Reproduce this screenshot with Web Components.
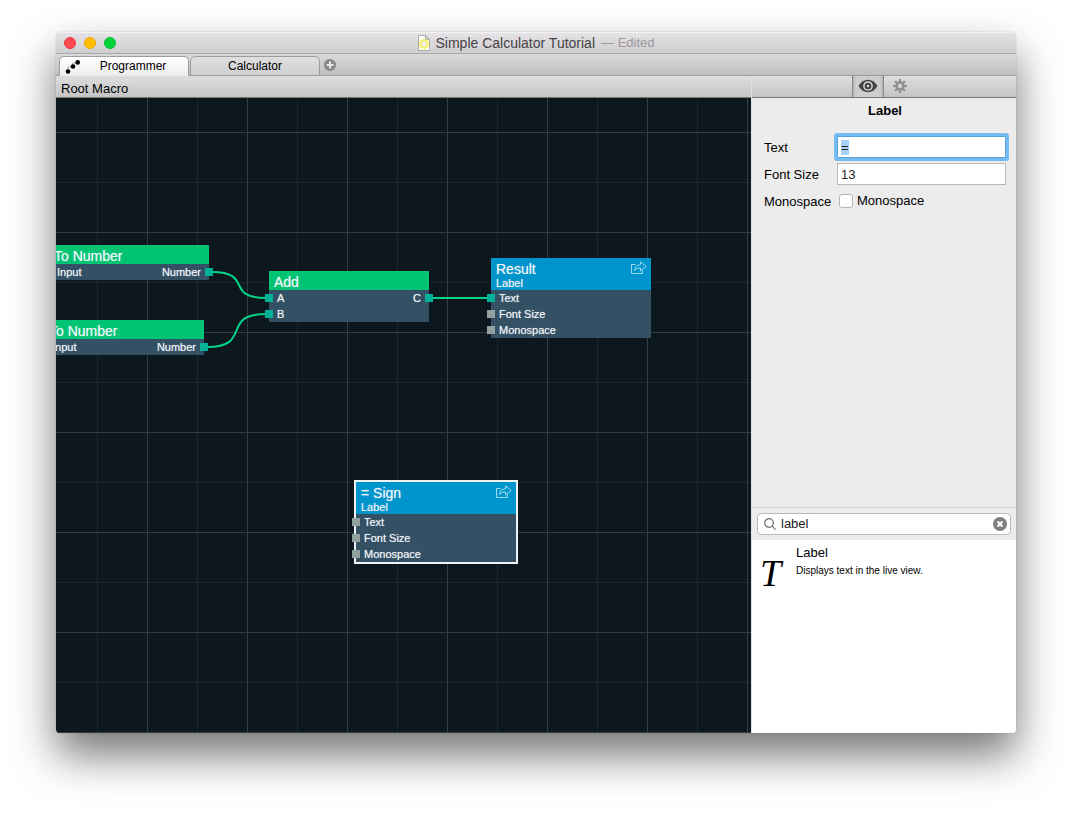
<!DOCTYPE html>
<html lang="en">
<head>
<meta charset="utf-8">
<title>Simple Calculator Tutorial</title>
<style>
  html { height: 100%; }
  body {
    box-sizing: border-box;
    min-height: 100%;
    margin: 0;
    padding: 32px 56px 80px;
    display: flex;
    background: #fff;
    color: #000;
    font: 13px/16px "Liberation Sans", Arial, sans-serif;
  }
</style>
</head>
<body>
<app-window>
  <title-bar slot="title" name="Simple Calculator Tutorial" status="— Edited"></title-bar>
  <tab-strip slot="tabs">
    <doc-tab active>Programmer</doc-tab>
    <doc-tab>Calculator</doc-tab>
  </tab-strip>
  <path-bar slot="main">Root Macro</path-bar>
  <patch-canvas slot="main">
    <patch-node style="--x:-7px;--y:147px" name="To Number">
      <node-row in="on" out="on">Input<span slot="out">Number</span></node-row>
    </patch-node>
    <patch-node style="--x:-12px;--y:222px" name="To Number">
      <node-row in="on" out="on">Input<span slot="out">Number</span></node-row>
    </patch-node>
    <patch-node style="--x:213px;--y:173px" name="Add">
      <node-row in="on" out="on">A<span slot="out">C</span></node-row>
      <node-row in="on">B</node-row>
    </patch-node>
    <patch-node style="--x:435px;--y:160px" name="Result" kind="Label">
      <node-row in="on">Text</node-row>
      <node-row in="off">Font Size</node-row>
      <node-row in="off">Monospace</node-row>
    </patch-node>
    <patch-node style="--x:300px;--y:384px" name="= Sign" kind="Label" selected>
      <node-row in="off">Text</node-row>
      <node-row in="off">Font Size</node-row>
      <node-row in="off">Monospace</node-row>
    </patch-node>
  </patch-canvas>
  <panel-switch slot="side"></panel-switch>
  <node-inspector slot="side"></node-inspector>
  <patch-library slot="side">
    <library-item name="Label">Displays text in the live view.</library-item>
  </patch-library>
</app-window>

<script>
const define = (name, html, setup) => {
  const template = document.createElement('template');
  template.innerHTML = html;
  customElements.define(name, class extends HTMLElement {
    constructor() {
      super();
      this.attachShadow({ mode: 'open' }).append(template.content.cloneNode(true));
    }
    connectedCallback() {
      if (setup) setup(this, this.shadowRoot);
    }
  });
};

define('app-window', `
<style>
  :host {
    flex: 1; min-width: 0; display: flex; flex-direction: column;
    border-radius: 5px 5px 4px 4px; overflow: hidden;
    box-shadow: 0 0 1px rgba(0,0,0,.45), 0 22px 44px rgba(0,0,0,.54);
  }
  .split { flex: 1; display: flex; min-height: 0; }
  main { flex: 1; min-width: 0; display: flex; flex-direction: column; }
  aside {
    flex: 0 0 264px; display: flex; flex-direction: column;
    background: #ececec; border-left: 1px solid #dfe2e3;
  }
</style>
<slot name="title"></slot>
<slot name="tabs"></slot>
<div class="split">
  <main><slot name="main"></slot></main>
  <aside><slot name="side"></slot></aside>
</div>`);

define('title-bar', `
<style>
  :host {
    box-sizing: border-box; height: 22px; display: grid; grid-template-columns: 1fr auto 1fr;
    align-items: center; background: linear-gradient(#e6e3e6, #cfcdcf);
    border-top: 1px solid #f3f2f3; border-bottom: 1px solid #a9a9a9;
  }
  .lights { display: flex; gap: 8px; padding-left: 8px; }
  button { width: 12px; height: 12px; padding: 0; border-radius: 50%; border: 1px solid; }
  .close { background: #ff4a50; border-color: #ea3343; }
  .min { background: #ffbf00; border-color: #eaa900; }
  .zoom { background: #00d43a; border-color: #00bd33; }
  h1 { margin: 0; display: flex; align-items: center; gap: 6px; font-size: 14px; line-height: 20px; font-weight: 400; color: #454345; }
  i { font-style: normal; font-size: 13px; color: #9b999b; }
</style>
<div class="lights">
  <button class="close" aria-label="Close"></button>
  <button class="min" aria-label="Minimize"></button>
  <button class="zoom" aria-label="Zoom"></button>
</div>
<h1>
  <svg width="12" height="16" viewBox="0 0 12 16">
    <path d="M.5.5h7l4 4v11H.5z" fill="#fff" stroke="#a9a9a9"/>
    <path d="M7.500.5v4h4z" fill="#c9c9c9" stroke="#a9a9a9"/>
    <circle cx="6" cy="9" r="4.500" fill="none" stroke="#f3ee3a" stroke-width="1.800" stroke-dasharray="1.500 1.330"/>
    <circle cx="6" cy="9" r="3.200" fill="#f0f0f4" stroke="#f3e92c"/>
  </svg>
  <span class="name"></span><i></i>
</h1>
<span></span>`, (host, root) => {
  root.querySelector('.name').textContent = host.getAttribute('name');
  root.querySelector('i').textContent = host.getAttribute('status');
});

define('tab-strip', `
<style>
  :host {
    box-sizing: border-box; height: 22px; display: flex; gap: 1px; padding: 2px 3px 0;
    background: linear-gradient(#dadada, #bebebe); box-shadow: inset 0 -1px #9d9d9d;
  }
  button { width: 12px; height: 12px; margin: 3px; padding: 0; border: 0; background: none; }
  svg { display: block; }
</style>
<slot></slot>
<button aria-label="Add tab">
  <svg width="12" height="12" viewBox="0 0 12 12"><circle cx="6" cy="6" r="6" fill="#868686"/><path d="M6 2.500v7M2.500 6h7" stroke="#e6e6e6" stroke-width="2"/></svg>
</button>`);

define('doc-tab', `
<style>
  :host { flex: 0 1 130px; display: flex; }
  button {
    box-sizing: border-box; flex: 1; height: 20px; padding: 0 0 1px; position: relative;
    font: 12px/18px "Liberation Sans", Arial, sans-serif; color: #000; text-align: center;
    border: 1px solid #9d9d9d; border-radius: 5px 5px 0 0;
    background: linear-gradient(#dfdfdf, #cfcfcf);
  }
  svg { display: none; position: absolute; left: 5px; top: 3px; }
  :host([active]) button { background: linear-gradient(#fff, #eee); border-bottom-color: #eaeaea; padding-left: 18px; }
  :host([active]) svg { display: block; }
</style>
<button>
  <svg width="16" height="14" viewBox="0 0 16 14"><path d="M3 11.500V8q0-1 1-1h3.500V4q0-1 1-1H12" fill="none" stroke="#999"/><circle cx="3" cy="11.500" r="2.300"/><circle cx="8" cy="6.500" r="2.300"/><circle cx="12.700" cy="2.400" r="2.300"/></svg>
  <slot></slot>
</button>`);

define('path-bar', `
<style>
  :host {
    box-sizing: border-box; height: 22px; padding: 4px 5px 0; line-height: 17px;
    background: linear-gradient(#dedede, #c4c4c4); border-bottom: 1px solid #777;
  }
</style>
<slot></slot>`);

define('patch-canvas', `
<style>
  :host {
    flex: 1; display: block; position: relative; overflow: hidden;
    background:
      linear-gradient(90deg, #303d44 1px, transparent 1px) 91px 0 / 100px 100%,
      linear-gradient(#303d44 1px, transparent 1px) 0 34px / 100% 100px,
      linear-gradient(90deg, #1a282e 1px, transparent 1px) 41px 0 / 100px 100%,
      linear-gradient(#1a282e 1px, transparent 1px) 0 84px / 100% 100px,
      #0d171e;
  }
  svg { position: absolute; inset: 0; width: 100%; height: 100%; }
</style>
<slot></slot>
<svg fill="none" stroke="#00d68a" stroke-width="2">
  <path d="M156 174C198 174 168 200 210 200"/>
  <path d="M151 249C197 249 164 216 210 216"/>
  <path d="M376 200H435"/>
</svg>`);

define('patch-node', `
<style>
  :host {
    position: absolute; left: var(--x); top: var(--y); width: 160px;
    background: #345065; color: #f1f6f8; text-shadow: 0 0 1px rgba(241,246,248,.6);
  }
  header { background: #00c473; padding: 2px 5px 0; height: 17px; font-size: 14px; line-height: 18px; white-space: nowrap; }
  h2 { margin: 0; font: inherit; font-weight: 400; }
  p { display: none; margin: 0; font-size: 11px; line-height: 10px; }
  button { display: none; position: absolute; right: 4px; top: 3px; width: 16px; height: 13px; padding: 0; border: 0; background: none; }
  svg { display: block; }
  :host([kind]) header { background: #0094cc; height: 30px; }
  :host([kind]) p, :host([kind]) button { display: block; }
  :host([selected]) { box-shadow: 0 0 0 2px #eef2f4; }
</style>
<header>
  <h2></h2><p></p>
  <button aria-label="Open"><svg width="16" height="13" viewBox="0 0 16 13" fill="none" stroke="#9edbf2"><path d="M4.500 3.500h-4v9h11V9.500"/><path d="M3.500 9.500Q4 4 9.500 3.700V.9l5.700 4.600-5.700 4.300V7Q5.500 6.500 3.500 9.500z" stroke-linejoin="round"/></svg></button>
</header>
<slot></slot>`, (host, root) => {
  root.querySelector('h2').textContent = host.getAttribute('name');
  root.querySelector('p').textContent = host.getAttribute('kind') || '';
});

define('node-row', `
<style>
  :host { position: relative; z-index: 1; display: flex; justify-content: space-between; height: 16px; padding: 0 8px; font-size: 11px; line-height: 17px; }
  :host::before, :host::after { content: none; position: absolute; top: 4px; width: 8px; height: 8px; background: #00b097; }
  :host([in])::before { content: ""; left: -4px; }
  :host([in="off"])::before { background: #929f9f; }
  :host([out])::after { content: ""; right: -4px; }
</style>
<span><slot></slot></span><slot name="out"></slot>`);

define('panel-switch', `
<style>
  :host {
    box-sizing: border-box; height: 22px; display: flex; justify-content: center;
    background: linear-gradient(#dedede, #c4c4c4); border-bottom: 1px solid #777;
  }
  button { box-sizing: border-box; width: 32px; height: 20px; padding: 0; display: flex; align-items: center; justify-content: center; border: 0; background: none; }
  .on { height: 21px; padding-bottom: 1px; background: linear-gradient(90deg, #b4b4b4, #cdcdcd 3px, #cdcdcd 27px, #b4b4b4); border: solid #858585; border-width: 0 1px; }
</style>
<button class="on" aria-label="View">
  <svg width="20" height="14" viewBox="0 0 20 14"><path d="M.5 7Q4.500.8 10 .8T19.500 7Q15.500 13.200 10 13.200T.5 7z" fill="#404040"/><circle cx="10" cy="7" r="4.100" fill="none" stroke="#d6d6d6" stroke-width="1.500"/><circle cx="10" cy="7" r="1.300" fill="#d6d6d6"/></svg>
</button>
<button aria-label="Settings">
  <svg width="14" height="14" viewBox="-7 -7 14 14" fill="none" stroke="#8f8f8f"><circle r="3.500" stroke-width="2.600"/><path d="M0-7V-4M0 7V4M-7 0H-4M7 0H4M-4.900-4.900-3-3M4.900 4.900 3 3M-4.900 4.900-3 3M4.900-4.900 3-3" stroke-width="2.200"/></svg>
</button>`);

define('node-inspector', `
<style>
  :host { flex: 1; display: block; padding: 4px 10px 16px 12px; }
  h2 { margin: 0 0 16px; text-align: center; font-size: 13px; line-height: 18px; }
  form { display: grid; grid-template-columns: 68px 1fr; column-gap: 5px; row-gap: 5px; align-items: center; }
  label { line-height: 22px; white-space: nowrap; }
  form > label { line-height: 24px; margin: -1px 0; }
  form > label { height: 24px; line-height: 25px; }
  input[type=text] {
    box-sizing: border-box; width: 100%; height: 22px; padding: 0 3px; outline: none;
    border: 1px solid #b8b8b8; border-radius: 0; background: #fff; color: #222; font: inherit;
  }
  #text { border-color: #5aa5dc; box-shadow: 0 0 0 3px #76bcf3; border-radius: 1px; }
  ::selection { background: #a8d3fd; color: #222; }
  .check { display: flex; align-items: center; gap: 4px; padding-left: 2px; }
  input[type=checkbox] { appearance: none; box-sizing: border-box; width: 14px; height: 14px; margin: 0; background: #fff; border: 1px solid #b5b5b5; border-radius: 3px; }
</style>
<h2>Label</h2>
<form>
  <label for="text">Text</label><input id="text" type="text" value="=">
  <label for="size">Font Size</label><input id="size" type="text" value="13">
  <label for="mono">Monospace</label>
  <div class="check"><input id="mono" type="checkbox"><label for="mono">Monospace</label></div>
</form>`, (host, root) => {
  const field = root.getElementById('text');
  field.focus();
  field.select();
});

define('patch-library', `
<style>
  :host { display: block; border-top: 1px solid #d0d0d0; }
  .search { display: flex; align-items: center; gap: 5px; box-sizing: border-box; height: 22px; margin: 5px; padding: 0 3px 0 6px; background: #fff; border: 1px solid #b9b9b9; border-radius: 4px; }
  input { flex: 1; min-width: 0; padding: 0; border: 0; outline: 0; background: none; font: inherit; color: #222; }
  button { width: 14px; height: 14px; padding: 0; border: 0; background: none; }
  svg { display: block; }
  .list { min-height: 193px; background: #fff; }
</style>
<div class="search">
  <svg width="12" height="12" viewBox="0 0 12 12" fill="none" stroke="#6d6d6d" stroke-width="1.200"><circle cx="5" cy="5" r="4.300"/><path d="M8.200 8.200 11.600 11.600"/></svg>
  <input type="text" aria-label="Search" value="label">
  <button aria-label="Clear"><svg width="14" height="14" viewBox="0 0 14 14"><circle cx="7" cy="7" r="7" fill="#808080"/><path d="M4.500 4.500 9.500 9.500M9.500 4.500 4.500 9.500" stroke="#fff" stroke-width="2"/></svg></button>
</div>
<div class="list"><slot></slot></div>`);

define('library-item', `
<style>
  :host { display: flex; padding: 5px 8px; }
  .icon { width: 36px; height: 48px; font: italic 38px/56px "Liberation Serif", serif; }
  h3 { margin: 0; font-size: 13px; line-height: 16px; font-weight: 400; }
  p { margin: 4px 0 0; font-size: 10px; line-height: 12px; }
</style>
<span class="icon">T</span>
<div><h3></h3><p><slot></slot></p></div>`, (host, root) => {
  root.querySelector('h3').textContent = host.getAttribute('name');
});
</script>
</body>
</html>
